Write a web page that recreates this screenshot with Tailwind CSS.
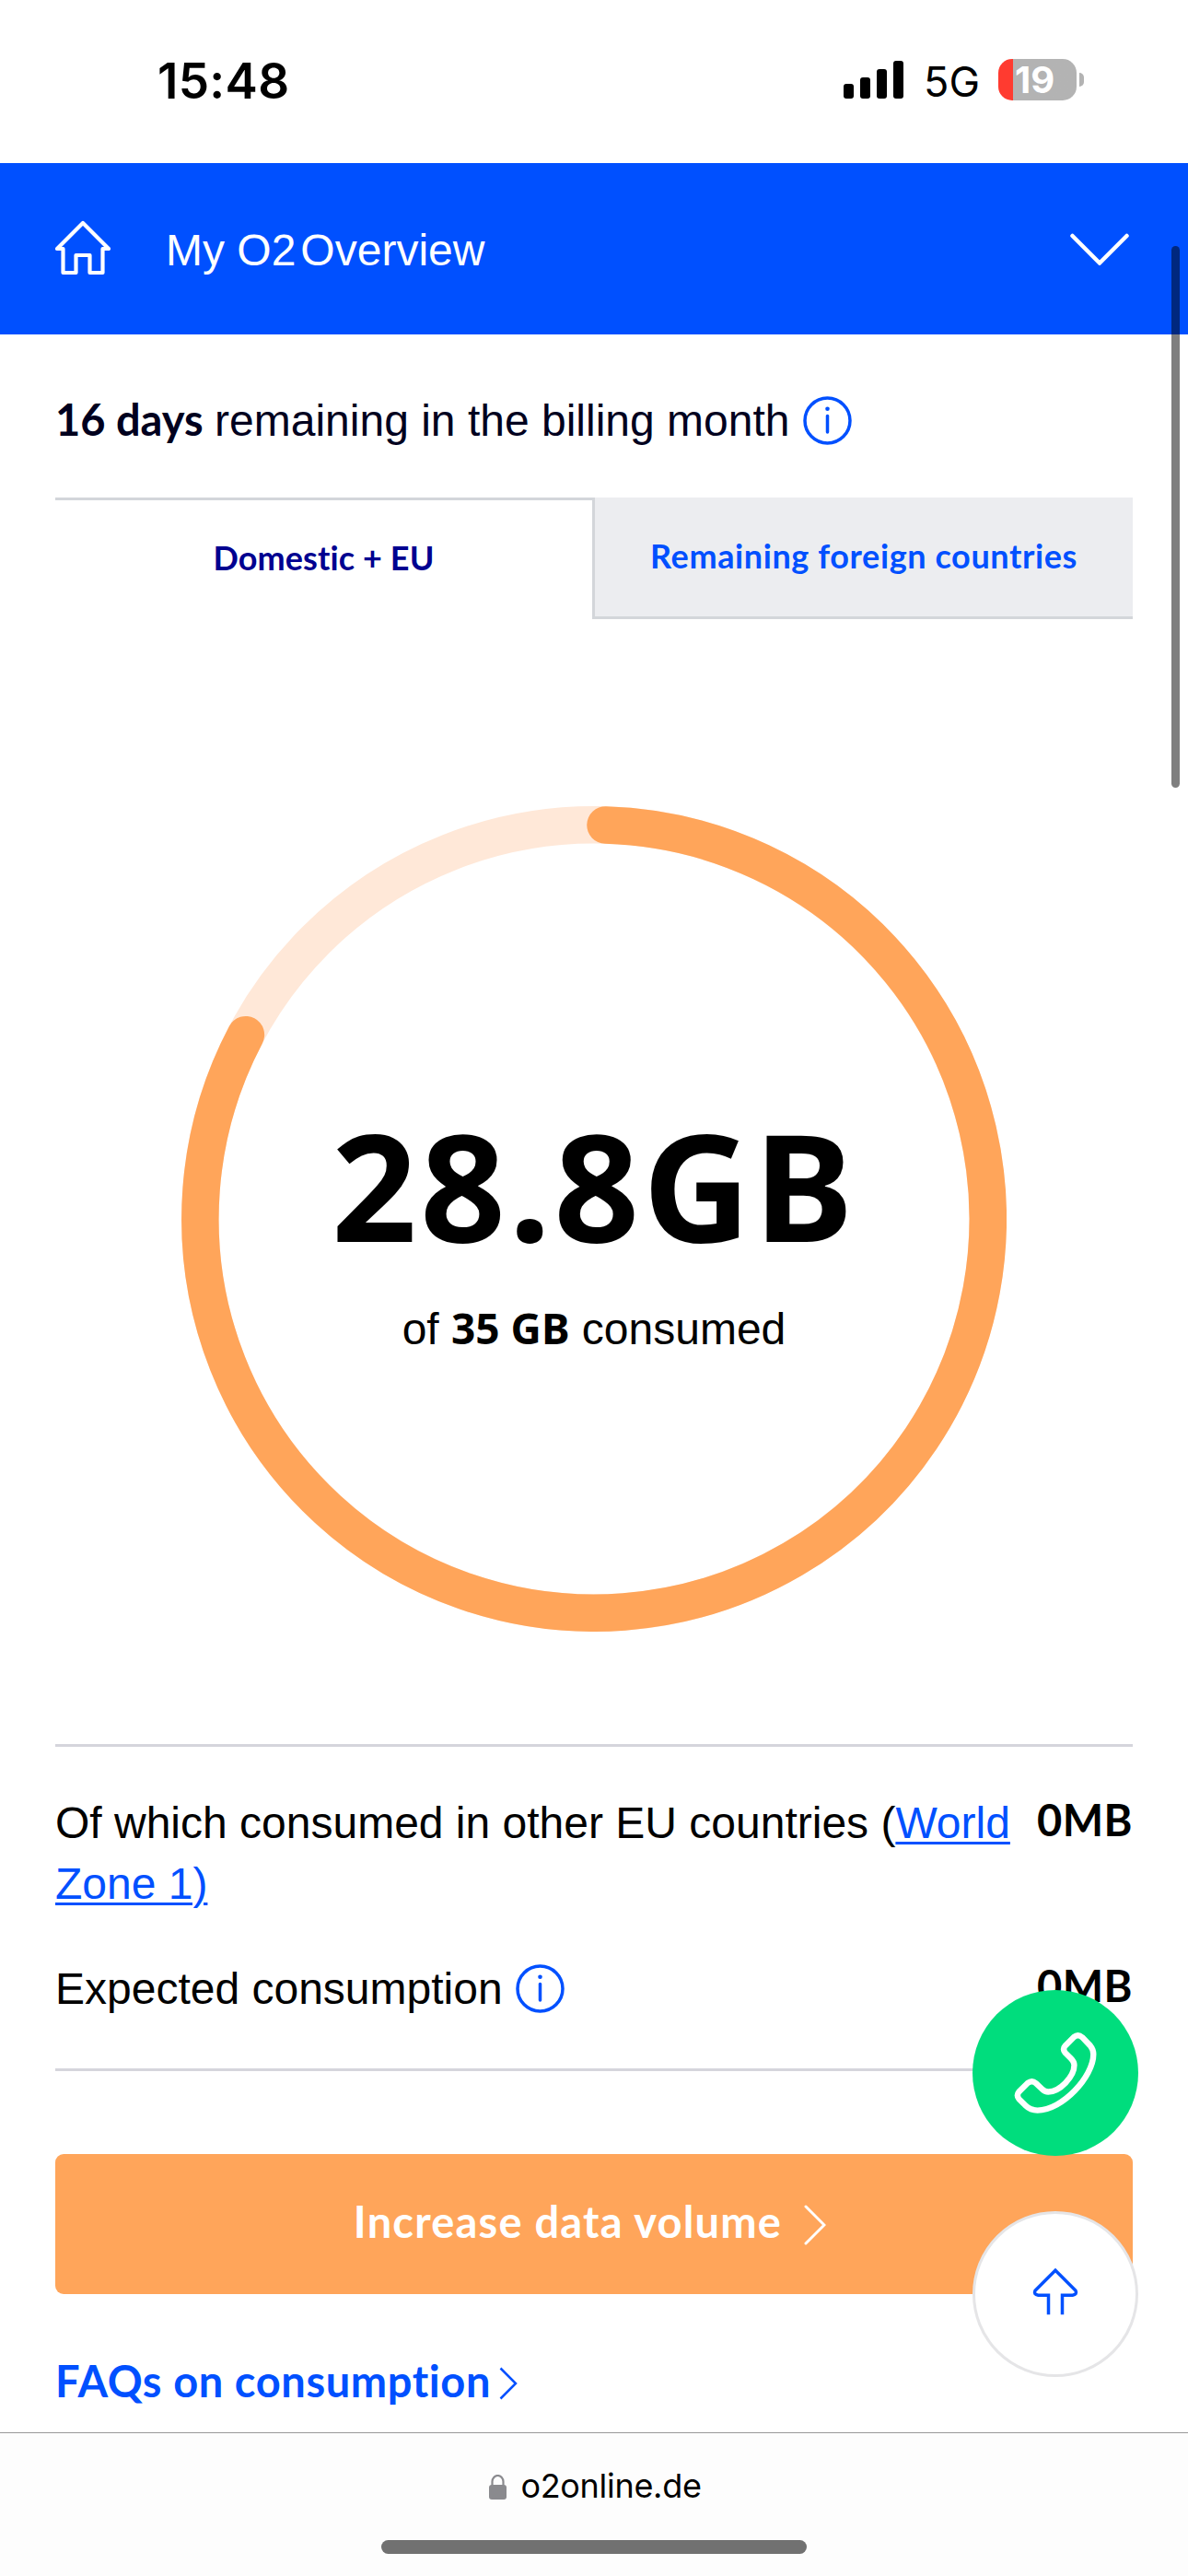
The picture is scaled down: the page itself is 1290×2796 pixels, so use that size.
<!DOCTYPE html>
<html lang="en">
<head>
  <meta charset="UTF-8" />
  <meta name="viewport" content="width=device-width, initial-scale=1.0" />
  <title>My O2 Overview</title>
  <script src="https://cdn.jsdelivr.net/npm/@tailwindcss/browser@4"></script>
</head>
<body class="flex flex-col h-[2796px] bg-white text-black text-[48px] font-['Liberation_Sans',sans-serif]">

  <!-- Status bar -->
  <div class="flex items-center justify-between h-[177px] pl-[171px] pr-[113px] font-['Inter',sans-serif]">
    <span class="text-[53px] leading-none font-semibold tracking-[0.3px]">15:48</span>
    <div class="flex items-center">
      <svg class="w-[65px] h-[41px] mb-1" viewBox="0 0 65 41">
        <rect x="0" y="25" width="11" height="16" rx="3" />
        <rect x="18" y="18" width="11" height="23" rx="3" />
        <rect x="36" y="9" width="11" height="32" rx="3" />
        <rect x="54" y="0" width="11" height="41" rx="3" />
      </svg>
      <span class="ml-[22px] text-[45px] leading-none">5G</span>
      <div class="flex items-center ml-[20px] mb-1">
        <div class="flex items-center w-[85px] h-[45px] pl-[18px] rounded-[15px] bg-linear-to-r from-[#ff3b30] from-[16px] to-[#b3b3b3] to-[16px]">
          <span class="text-[40px] leading-none font-bold text-white">19</span>
        </div>
        <div class="w-[5px] h-[15px] ml-[3px] rounded-r-full bg-[#b3b3b3]"></div>
      </div>
    </div>
  </div>

  <!-- Navigation -->
  <header class="flex items-center h-[186px] pl-[60px] pr-[63px] bg-[#0050ff] text-white">
    <svg class="w-[60px] h-[60px] mb-[3px]" viewBox="0 0 60 60" fill="none" stroke="currentColor" stroke-width="4.200">
      <path d="M2 31L30 3L58 31H51.500V57H37.500V38H22.500V57H8.500V31Z" stroke-linejoin="round" />
    </svg>
    <h1 class="ml-[60px] mt-[3px] leading-none">My O2<span class="ml-[5px]">Overview</span></h1>
    <svg class="w-[66px] h-[36px] ml-auto" viewBox="0 0 66 36" fill="none" stroke="currentColor" stroke-width="4.500" stroke-linecap="round">
      <path d="M3.500 4L33 33.500L62.500 4" />
    </svg>
  </header>

  <main class="flex-1 px-[60px] pt-[67px]">

    <div class="flex items-center text-[#00001e]">
      <p class="leading-[53px]"><b class="-mr-px text-[47px] leading-none font-['Lato',sans-serif]">16 days</b> remaining in the billing month</p>
      <svg class="w-[53px] h-[53px] ml-[15px] text-[#0050ff]" viewBox="0 0 53 53" fill="none" stroke="currentColor" stroke-width="3.500" stroke-linecap="round">
        <circle cx="26.500" cy="26.500" r="24.500" />
        <path d="M26.500 21.500V39" />
        <circle cx="26.500" cy="13.800" r="2.300" fill="currentColor" stroke="none" />
      </svg>
    </div>

    <!-- Tabs -->
    <div class="flex h-[132px] mt-[57px] text-[36px] font-bold font-['Lato',sans-serif]">
      <a class="flex items-center justify-center w-[583px] pb-[5px] border-t-3 border-[#d3d6da] text-[#000090] tracking-[0.1px]">Domestic + EU</a>
      <a class="flex items-center justify-center flex-1 pb-[3px] border-l-3 border-b-3 border-[#d3d6da] bg-[#ecedf0] text-[#0050ff] tracking-[0.6px]">Remaining foreign countries</a>
    </div>

    <!-- Consumption ring -->
    <div class="grid place-items-center mt-[203px]">
      <svg class="col-start-1 row-start-1 w-[896px] h-[896px]" viewBox="0 0 896 896" fill="none" stroke-width="40.500">
        <circle cx="448" cy="448" r="427.700" stroke="#ffe8d8" />
        <path d="M460.500 20.500A427.700 427.700 0 1 1 69.900 248.200" stroke="#ffa55a" stroke-linecap="round" />
      </svg>
      <div class="col-start-1 row-start-1 flex flex-col items-center gap-[49px] pt-[29px]">
        <span class="text-[162px] leading-[162px] font-bold tracking-[3.6px] font-['Noto_Sans',sans-serif]">28.8GB</span>
        <p class="leading-14">of <b class="text-[46px] leading-none font-['Noto_Sans',sans-serif]">35 GB</b> consumed</p>
      </div>
    </div>

    <!-- Details -->
    <div class="mt-[122px] pt-[50px] pb-[53px] border-y-3 border-[#d5d5dc] leading-[66px]">
      <div class="flex justify-between">
        <p class="w-[1050px]">Of which consumed in other EU countries (<a class="text-[#0050ff] underline decoration-[3px] underline-offset-[4px]">World Zone 1)</a></p>
        <b class="-mt-1 text-[47px] tracking-[0.5px] font-['Lato',sans-serif]">0MB</b>
      </div>
      <div class="flex mt-[48px]">
        <p>Expected consumption</p>
        <svg class="w-[53px] h-[53px] mt-[6px] ml-[14px] text-[#0050ff]" viewBox="0 0 53 53" fill="none" stroke="currentColor" stroke-width="3.500" stroke-linecap="round">
          <circle cx="26.500" cy="26.500" r="24.500" />
          <path d="M26.500 21.500V39" />
          <circle cx="26.500" cy="13.800" r="2.300" fill="currentColor" stroke="none" />
        </svg>
        <b class="ml-auto -mt-1 text-[47px] tracking-[0.5px] font-['Lato',sans-serif]">0MB</b>
      </div>
    </div>

    <button class="flex items-center justify-center w-full h-[152px] mt-[90px] pr-[9px] rounded-[9px] bg-[#ffa55a] text-white text-[47px] font-bold font-['Lato',sans-serif]">
      <span class="mb-[5px] leading-none tracking-[1.2px]">Increase data volume</span>
      <svg class="w-[24px] h-[44px] ml-[24px] mt-[2px]" viewBox="0 0 24 44" fill="none" stroke="currentColor" stroke-width="3" stroke-linecap="round">
        <path d="M2 2L22 22L2 42" />
      </svg>
    </button>

    <a class="flex items-center h-[60px] mt-[63px] text-[#0050ff] text-[47px] font-bold font-['Lato',sans-serif]">
      <span class="mt-[3px] leading-none tracking-[0.6px]">FAQs on consumption</span>
      <svg class="w-[20px] h-[36px] ml-[9px] mt-[7px]" viewBox="0 0 20 36" fill="none" stroke="currentColor" stroke-width="2.500">
        <path d="M1.500 1.500L18 18L1.500 34.500" />
      </svg>
    </a>
  </main>

  <!-- Browser bar -->
  <footer class="flex flex-col items-center justify-between h-[156px] pt-[37px] pb-6 border-t border-[#999] bg-[#fdfdfd]">
    <div class="flex items-center h-[40px] pl-[3px] text-[36px] font-['Inter',sans-serif]">
      <svg class="w-[19px] h-[27px] mt-[2px]" viewBox="0 0 19 27" fill="#8a8a8e">
        <rect x="0" y="11" width="19" height="16" rx="3" />
        <path d="M3.500 12V7.500a6 6.500 0 0 1 12 0V12" fill="none" stroke="#8a8a8e" stroke-width="2.200" />
      </svg>
      <span class="ml-[15px] leading-none tracking-[-0.3px]">o2online.de</span>
    </div>
    <div class="w-[462px] h-[15px] rounded-full bg-[#717171]"></div>
  </footer>

  <!-- Floating buttons -->
  <button class="absolute top-[2160px] right-[54px] flex items-center justify-center size-[180px] rounded-full bg-[#00dd7d]">
    <svg class="w-[94px] h-[94px]" viewBox="418 310 280 280" fill="none" stroke="white" stroke-width="19">
      <path d="M618 334L590 362Q580 373 590 385L609 404Q619 414 619 425C619 462 572 511 535 511Q524 511 515 502L495 483Q482 472 468 483L440 511Q431 522 440 534L462 556Q477 571 500 571C580 571 681 462 681 390Q681 374 671 362L645 335Q631 323 618 334Z" />
    </svg>
  </button>
  <button class="absolute top-[2400px] right-[54px] flex items-center justify-center size-[180px] rounded-full border-3 border-[#e5e5e7] bg-white">
    <svg class="w-[60px] h-[60px]" viewBox="468 1080 180 180" fill="none" stroke="#0050ff" stroke-width="10.500">
      <path d="M535.500 1237V1173.500H502Q486 1171 492 1159L558 1092.500L624 1159Q630 1171 614 1173.500H580.500V1237" />
    </svg>
  </button>

  <!-- Scroll indicator -->
  <div class="absolute top-[267px] right-[9px] w-[9px] h-[588px] rounded-full bg-black/50"></div>

</body>
</html>
